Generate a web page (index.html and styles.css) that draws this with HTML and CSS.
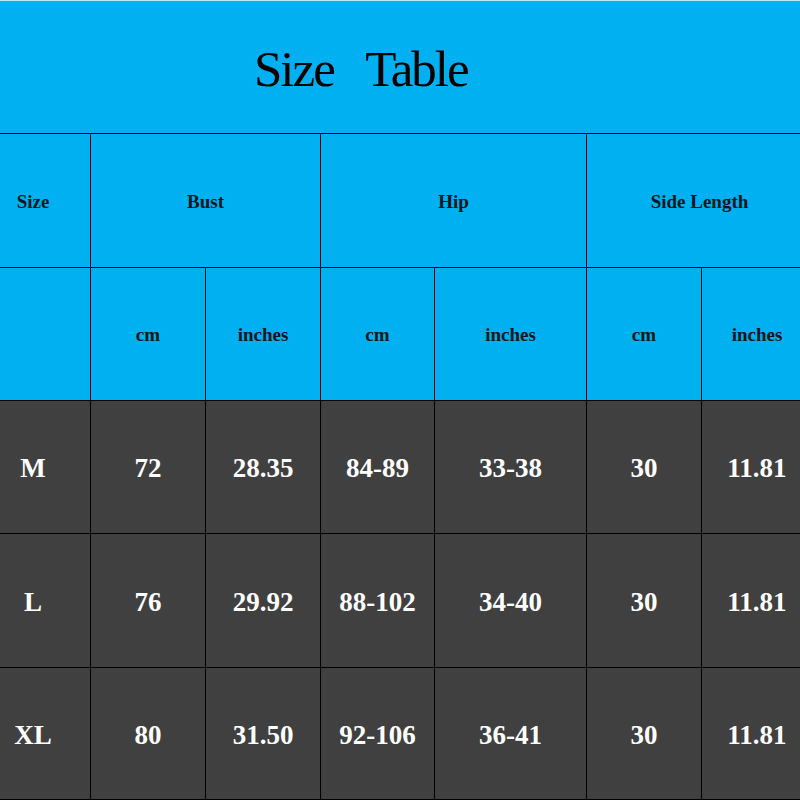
FILE: index.html
```html
<!DOCTYPE html>
<html>
<head>
<meta charset="utf-8">
<link rel="stylesheet" href="styles.css">
</head>
<body>
<div class="table">
  <div class="title"><span class="title-text">Size   Table</span></div>

  <div class="cell head first">Size</div>
  <div class="cell head span2">Bust</div>
  <div class="cell head span2">Hip</div>
  <div class="cell head span2 last">Side Length</div>

  <div class="cell head first"></div>
  <div class="cell head">cm</div>
  <div class="cell head">inches</div>
  <div class="cell head">cm</div>
  <div class="cell head">inches</div>
  <div class="cell head">cm</div>
  <div class="cell head last">inches</div>

  <div class="cell data first">M</div>
  <div class="cell data">72</div>
  <div class="cell data">28.35</div>
  <div class="cell data">84-89</div>
  <div class="cell data">33-38</div>
  <div class="cell data">30</div>
  <div class="cell data last">11.81</div>

  <div class="cell data first">L</div>
  <div class="cell data">76</div>
  <div class="cell data">29.92</div>
  <div class="cell data">88-102</div>
  <div class="cell data">34-40</div>
  <div class="cell data">30</div>
  <div class="cell data last">11.81</div>

  <div class="cell data first">XL</div>
  <div class="cell data">80</div>
  <div class="cell data">31.50</div>
  <div class="cell data">92-106</div>
  <div class="cell data">36-41</div>
  <div class="cell data">30</div>
  <div class="cell data last">11.81</div>
</div>
</body>
</html>
```

FILE: styles.css
```css
html, body {
  margin: 0;
  padding: 0;
  background: #000;
}

.table {
  width: 800px;
  height: 800px;
  display: grid;
  grid-template-columns: 90px 114px 114px 113px 151px 114px 98px;
  grid-template-rows: 133px 133px 132px 132px 133px 131px;
  gap: 1px;
  background: #000;
  border-bottom: 1px solid #000;
  box-sizing: border-box;
  overflow: hidden;
}

.title {
  grid-column: 1 / -1;
  background: #00b0f0;
  border-top: 1px solid #b9e8fb;
  display: flex;
  align-items: center;
  padding-left: 254px;
  padding-top: 3px;
}

.title-text {
  font-family: "Liberation Serif", serif;
  font-size: 51px;
  letter-spacing: -2px;
  white-space: pre;
  color: #000;
}

.cell {
  display: flex;
  align-items: center;
  justify-content: center;
  font-family: "Liberation Serif", serif;
  font-weight: bold;
  white-space: nowrap;
}

.head {
  background: #00b0f0;
  color: #0c1620;
  font-size: 19px;
  padding-top: 2px;
}

.data {
  background: #404040;
  color: #fff;
  font-size: 27px;
  padding-top: 3px;
}

.span2 {
  grid-column: span 2;
}

.first {
  padding-right: 24px;
}

.last {
  padding-left: 12px;
}
```
